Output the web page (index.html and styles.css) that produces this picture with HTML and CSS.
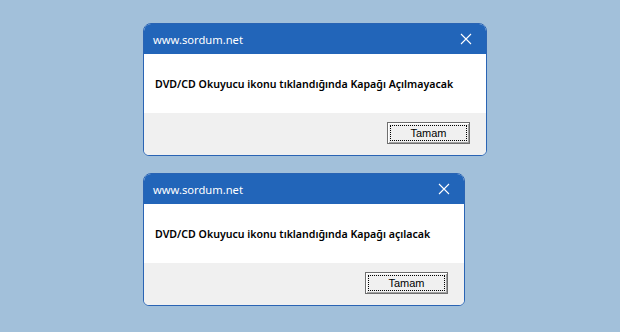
FILE: index.html
```html
<!DOCTYPE html>
<html lang="tr">
<head>
    <meta charset="UTF-8">
    <meta name="viewport" content="width=device-width, initial-scale=1.0">
    <title>Kapak</title>
    <link rel="stylesheet" href="styles.css">
</head>
<body>
    <div class="stack">
        <div class="dialog wide">
            <div class="title-bar">
                <span>www.sordum.net</span>
                <svg class="close" width="12" height="12" viewBox="0 0 12 12"><path d="M1 1L11 11M11 1L1 11" stroke="#fff" stroke-width="1.1"/></svg>
            </div>
            <div class="message">DVD/CD Okuyucu ikonu tıklandığında Kapağı Açılmayacak</div>
            <div class="footer">
                <button class="btn"><span>Tamam</span></button>
            </div>
        </div>
        <div class="dialog narrow">
            <div class="title-bar">
                <span>www.sordum.net</span>
                <svg class="close" width="12" height="12" viewBox="0 0 12 12"><path d="M1 1L11 11M11 1L1 11" stroke="#fff" stroke-width="1.1"/></svg>
            </div>
            <div class="message">DVD/CD Okuyucu ikonu tıklandığında Kapağı açılacak</div>
            <div class="footer">
                <button class="btn"><span>Tamam</span></button>
            </div>
        </div>
    </div>
</body>
</html>
```

FILE: styles.css
```css
body {
    margin: 0;
    width: 620px;
    height: 332px;
    background: #a2c0da;
    font-family: "Noto Sans", sans-serif;
    overflow: hidden;
}
.stack {
    display: flex;
    flex-direction: column;
    gap: 17px;
    padding: 23px 0 0 143px;
}
.dialog {
    border: 1px solid #2a64b4;
    border-radius: 8px 8px 6px 6px;
    overflow: hidden;
    background: #fff;
}
.wide {
    width: 342px;
}
.narrow {
    width: 320px;
}
.title-bar {
    height: 30px;
    background: #2265b9;
    color: #fff;
    font-size: 11.2px;
    display: flex;
    align-items: center;
    justify-content: space-between;
    padding: 0 14px 0 9px;
}
.close {
    display: block;
}
.message {
    height: 59px;
    display: flex;
    align-items: center;
    padding-left: 11px;
    font-size: 10.6px;
    font-weight: 600;
    color: #000;
}
.footer {
    background: #f0f0f0;
    height: 42px;
    display: flex;
    justify-content: flex-end;
    align-items: flex-start;
    padding: 9px 16px 0 0;
    box-sizing: border-box;
}
.btn {
    width: 83px;
    height: 22px;
    padding: 2px;
    background: #f0f0f0;
    border: 1px solid #6f6f6f;
    box-shadow: inset 1px 1px 0 #fff, inset -1px -1px 0 #a0a0a0;
    font-family: "Liberation Sans", sans-serif;
    font-size: 11px;
    color: #000;
}
.btn span {
    display: flex;
    align-items: center;
    justify-content: center;
    height: 100%;
    border: 1px dotted #000;
    box-sizing: border-box;
}
```
